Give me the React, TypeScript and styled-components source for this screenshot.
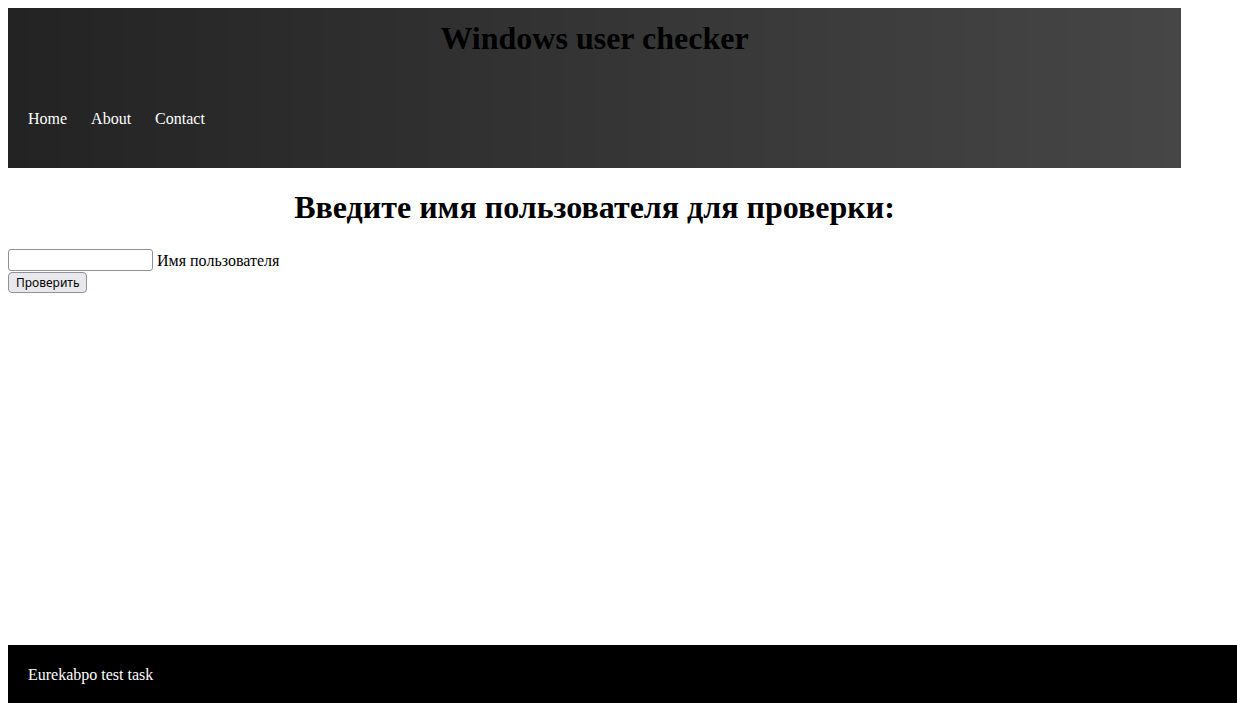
import styled, { createGlobalStyle } from "styled-components";

const GlobalStyle = createGlobalStyle`
  body {
    margin: 8px;
    font-family: "Liberation Serif", "Times New Roman", serif;
    font-size: 16px;
    color: black;
    background: white;
  }
`;

function App() {
  return (
    <>
      <GlobalStyle />
      <Header>
        <Title>Windows user checker</Title>
        <Nav>
          <NavLink href="#">Home</NavLink>
          <NavLink href="#">About</NavLink>
          <NavLink href="#">Contact</NavLink>
        </Nav>
      </Header>
      <Main>
        <Heading>Введите имя пользователя для проверки:</Heading>
        <Form onSubmit={(e) => e.preventDefault()}>
          <Row>
            <Input type="text" id="username" /> <label htmlFor="username">Имя пользователя</label>
          </Row>
          <Button type="submit">Проверить</Button>
        </Form>
      </Main>
      <Footer>
        <FooterText>Eurekabpo test task</FooterText>
      </Footer>
    </>
  );
}

export default App;

const Header = styled.header`
  width: 1173px;
  height: 160px;
  box-sizing: border-box;
  padding: 12px 0 0 0;
  background: linear-gradient(to right, #232323, #464646);
`;

const Title = styled.h1`
  font-size: 32px;
  font-weight: 700;
  text-align: center;
  color: black;
  margin: 0;
`;

const Nav = styled.nav`
  display: flex;
  gap: 24px;
  padding: 20px;
  margin: 33px 0 0 0;
`;

const NavLink = styled.a`
  color: white;
  text-decoration: none;
  font-size: 16px;
`;

const Main = styled.main`
  width: 1173px;
`;

const Heading = styled.h1`
  font-size: 32px;
  font-weight: 700;
  text-align: center;
  margin: 21.44px 0;
`;

const Form = styled.form`
  margin: 0;
`;

const Row = styled.div`
  padding: 1px 0 0 0;
  line-height: 23px;
`;

const Input = styled.input`
  width: 145px;
  height: 22px;
  box-sizing: border-box;
  padding: 1px 2px;
  border: 1px solid #8f8f9d;
  border-radius: 3px;
  background: white;
  vertical-align: top;
`;

const Button = styled.button`
  display: block;
  height: 21px;
  padding: 0 7px;
  box-sizing: border-box;
  font-family: "Noto Sans", "Open Sans", sans-serif;
  font-size: 12px;
  color: black;
  background: #e9e9ed;
  border: 1px solid #8f8f9d;
  border-radius: 4px;
`;

const Footer = styled.footer`
  position: fixed;
  bottom: 0;
  width: 100%;
  background: black;
  padding: 21px 20px 19px 20px;
  box-sizing: border-box;
`;

const FooterText = styled.span`
  color: white;
  font-size: 16px;
`;
